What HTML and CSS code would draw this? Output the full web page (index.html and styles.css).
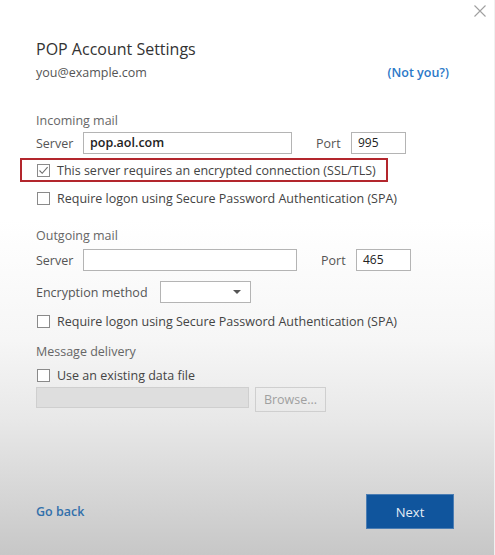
FILE: index.html
```html
<!DOCTYPE html>
<html lang="en">
<head>
  <meta charset="UTF-8">
  <meta name="viewport" content="width=device-width, initial-scale=1.0">
  <title>POP Account Settings</title>
  <link rel="stylesheet" href="styles.css">
</head>
<body>
  <div class="dialog">
    <button class="close" aria-label="Close">
      <svg width="12" height="12" viewBox="0 0 12 12"><path d="M0.5 0.5 L11.5 11.5 M11.5 0.5 L0.5 11.5" stroke="#a0a0a0" stroke-width="1.1" fill="none"/></svg>
    </button>

    <h1 class="title">POP Account Settings</h1>
    <div class="account">
      <span>you@example.com</span>
      <a href="#" class="link">(Not you?)</a>
    </div>

    <div class="section-label first">Incoming mail</div>
    <div class="row">
      <span class="label">Server</span>
      <span class="input server-in value">pop.aol.com</span>
      <span class="label port">Port</span>
      <span class="input port-in">995</span>
    </div>
    <div class="highlight">
      <label class="check"><span class="box checked">
        <svg width="11" height="11" viewBox="0 0 11 11"><path d="M1.5 5.5 L4.2 8.3 L9.6 2.2" stroke="#6d6d6d" stroke-width="1.1" fill="none"/></svg>
      </span>This server requires an encrypted connection (SSL/TLS)</label>
    </div>
    <label class="check spa-in"><span class="box"></span>Require logon using Secure Password Authentication (SPA)</label>

    <div class="section-label outgoing">Outgoing mail</div>
    <div class="row">
      <span class="label">Server</span>
      <span class="input server-out"></span>
      <span class="label port">Port</span>
      <span class="input port-in">465</span>
    </div>
    <div class="row enc">
      <span class="label enc-label">Encryption method</span>
      <span class="input select"><span class="arrow"></span></span>
    </div>
    <label class="check spa-out"><span class="box"></span>Require logon using Secure Password Authentication (SPA)</label>

    <div class="section-label delivery">Message delivery</div>
    <label class="check existing"><span class="box"></span>Use an existing data file</label>
    <div class="file-row">
      <span class="input disabled"></span>
      <span class="browse">Browse...</span>
    </div>

    <div class="footer">
      <a href="#" class="back">Go back</a>
      <button class="next">Next</button>
    </div>
  </div>
</body>
</html>
```

FILE: styles.css
```css
body {
  margin: 0;
  font-family: "Open Sans", "Noto Sans", sans-serif;
  font-size: 12.5px;
  color: #555;
}
.dialog {
  position: relative;
  height: 555px;
  box-sizing: border-box;
  padding: 37px 40px 26px 36px;
  display: flex;
  flex-direction: column;
  background: linear-gradient(to bottom, #fff 0, #fff 220px, #f6f6f6 340px, #e8e8e8 420px, #c7c7c7 555px);
  border-right: 1px solid #f0f0f0;
}
.close {
  position: absolute;
  top: 5px;
  right: 8px;
  background: none;
  border: none;
  padding: 0;
  width: 12px;
  height: 12px;
}
.title {
  margin: 0;
  font-size: 16px;
  font-weight: normal;
  line-height: 24px;
  color: #333;
}
.account {
  margin-top: 2px;
  line-height: 20px;
  display: flex;
  justify-content: space-between;
  padding-right: 5px;
  color: #555;
}
.link {
  color: #2b78c8;
  text-decoration: none;
  font-weight: 600;
}
.section-label {
  line-height: 20px;
  color: #666;
}
.section-label.first { margin-top: 28px; }
.section-label.outgoing { margin-top: 17px; }
.section-label.delivery { margin-top: 10px; }
.row {
  display: flex;
  align-items: center;
  height: 22px;
  margin-top: 1px;
}
.label {
  width: 47px;
  color: #555;
}
.label.port {
  width: 35px;
  margin-left: 24px;
}
.input {
  box-sizing: border-box;
  height: 22px;
  border: 1px solid #b4b4b4;
  background: #fff;
  padding: 0 6px;
  line-height: 20px;
  color: #222;
  font-size: 12px;
}
.value {
  font-weight: 600;
  font-size: 12.5px;
}
.server-in { width: 209px; }
.server-out { width: 214px; }
.port-in { width: 55px; }
.outgoing + .row { margin-top: 3px; }
.row.enc { margin-top: 10px; }
.enc-label { width: 124px; }
.select {
  width: 91px;
  position: relative;
}
.arrow {
  position: absolute;
  right: 9px;
  top: 8px;
  border-left: 4px solid transparent;
  border-right: 4px solid transparent;
  border-top: 4px solid #555;
}
.check {
  display: flex;
  align-items: center;
  height: 22px;
  color: #444;
  white-space: nowrap;
}
.box {
  box-sizing: border-box;
  width: 13px;
  height: 13px;
  border: 1px solid #8a8a8a;
  margin: 0 7px 0 1px;
  display: flex;
  align-items: center;
  justify-content: center;
  background: #fff;
  flex-shrink: 0;
}
.highlight {
  margin: 4px 0 0 -16px;
  width: 368px;
  height: 24px;
  box-sizing: border-box;
  border: 2px solid #b3262d;
  padding-left: 14px;
  display: flex;
  align-items: center;
}
.spa-in { margin-top: 5px; }
.spa-out { margin-top: 7px; }
.existing { margin-top: 2px; }
.file-row {
  display: flex;
  align-items: flex-start;
  margin-top: 1px;
}
.disabled {
  width: 213px;
  height: 21px;
  background: #dedede;
  border-color: #cfcfcf;
}
.browse {
  box-sizing: border-box;
  width: 71px;
  height: 25px;
  margin-left: 6px;
  border: 1px solid #cfcfcf;
  color: #a0a0a0;
  line-height: 23px;
  text-align: center;
}
.footer {
  margin-top: auto;
  display: flex;
  align-items: center;
  justify-content: space-between;
}
.back {
  color: #3270ab;
  text-decoration: none;
  font-weight: 600;
}
.next {
  width: 88px;
  height: 35px;
  background: #10559d;
  border: 1px solid #4b7db3;
  color: #e6edf5;
  font-family: inherit;
  font-size: 13px;
}
```
